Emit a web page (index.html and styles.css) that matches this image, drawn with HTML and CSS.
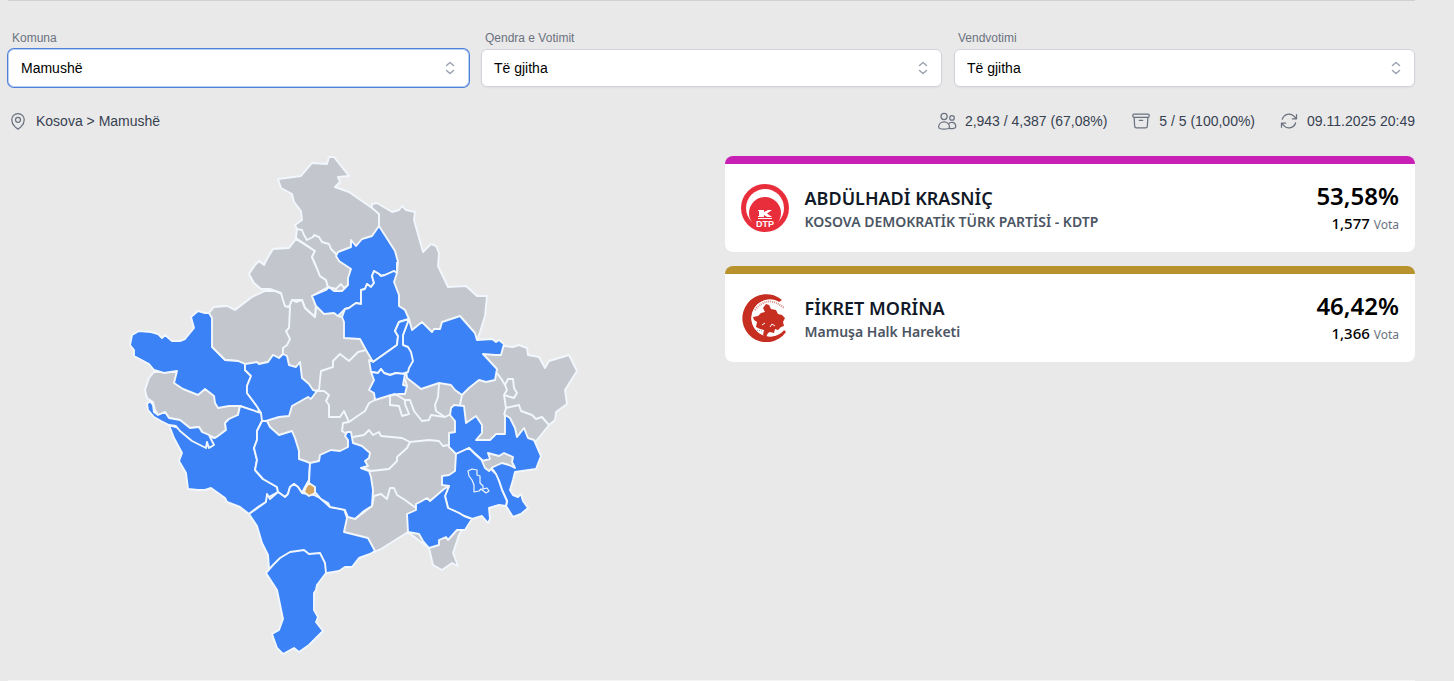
FILE: index.html
```html
<!DOCTYPE html>
<html lang="sq">
<head>
<meta charset="utf-8">
<meta name="viewport" content="width=device-width, initial-scale=1">
<title>Kosova - Mamushë</title>
<link rel="stylesheet" href="styles.css">
</head>
<body>
<main class="page">
  <form class="filters">
    <div class="field">
      <label for="komuna">Komuna</label>
      <div class="select-wrap">
        <select id="komuna" class="is-active"><option>Mamushë</option></select>
        <svg class="chevrons" viewBox="0 0 20 20" aria-hidden="true"><path d="M6.500 7.500l3.500-3 3.500 3M6.500 12.500l3.500 3 3.500-3"/></svg>
      </div>
    </div>
    <div class="field">
      <label for="qendra">Qendra e Votimit</label>
      <div class="select-wrap">
        <select id="qendra"><option>Të gjitha</option></select>
        <svg class="chevrons" viewBox="0 0 20 20" aria-hidden="true"><path d="M6.500 7.500l3.500-3 3.500 3M6.500 12.500l3.500 3 3.500-3"/></svg>
      </div>
    </div>
    <div class="field">
      <label for="vendi">Vendvotimi</label>
      <div class="select-wrap">
        <select id="vendi"><option>Të gjitha</option></select>
        <svg class="chevrons" viewBox="0 0 20 20" aria-hidden="true"><path d="M6.500 7.500l3.500-3 3.500 3M6.500 12.500l3.500 3 3.500-3"/></svg>
      </div>
    </div>
  </form>

  <div class="status">
    <div class="stat">
      <svg class="icon" viewBox="0 0 24 24" aria-hidden="true"><path d="M15 10.500a3 3 0 1 1-6 0 3 3 0 0 1 6 0Z"/><path d="M19.500 10.500c0 7.142-7.500 11.250-7.500 11.250S4.500 17.642 4.500 10.500a7.500 7.500 0 1 1 15 0Z"/></svg>
      <span>Kosova &gt; Mamushë</span>
    </div>
    <div class="stats">
      <div class="stat">
        <svg class="icon" viewBox="0 0 24 24" aria-hidden="true"><circle cx="8.500" cy="6.500" r="3.700"/><circle cx="18" cy="8.300" r="2.700"/><path d="M8.500 13c-4 0-6.500 2.800-6.500 6.200 0 1.500 3 2.600 6.500 2.600s6.500-1.100 6.500-2.600c0-3.400-2.500-6.200-6.500-6.200Z"/><path d="M13.600 15.500c1-1.200 2.500-1.900 4.200-1.900 3 0 4.700 2.200 4.700 5.200 0 1.900-3.900 3-7.700 2"/></svg>
        <span>2,943 / 4,387 (67,08%)</span>
      </div>
      <div class="stat">
        <svg class="icon" viewBox="0 0 24 24" aria-hidden="true"><path d="m20.250 7.500-.625 10.632a2.250 2.250 0 0 1-2.247 2.118H6.622a2.250 2.250 0 0 1-2.247-2.118L3.750 7.500M10 11.250h4M3.375 7.500h17.250c.621 0 1.125-.504 1.125-1.125v-1.500c0-.621-.504-1.125-1.125-1.125H3.375c-.621 0-1.125.504-1.125 1.125v1.500c0 .621.504 1.125 1.125 1.125Z"/></svg>
        <span>5 / 5 (100,00%)</span>
      </div>
      <div class="stat">
        <svg class="icon" viewBox="0 0 24 24" aria-hidden="true"><path d="M16.023 9.348h4.992V4.356M2.985 19.644v-4.992h4.992m-4.993 0 3.181 3.183a8.250 8.250 0 0 0 13.803-3.700M4.031 9.865a8.250 8.250 0 0 1 13.803-3.700l3.181 3.182"/></svg>
        <span>09.11.2025 20:49</span>
      </div>
    </div>
  </div>

  <div class="content">
    <div class="map-column">
      <svg class="map" viewBox="130 156 448 500" role="img" aria-label="Kosova">
        <g class="region">
          <!-- Country base -->
          <path d="M279 179L302 176 313 163 328 164 330 157 335 157 350 176 339 177 341 182 336 187 350 192 373 208 373 204 378 203 393 212 400 210 403 206 407 210 416 212 415 220 424 252 432 244 437 246 440 253 439 266 449 287 467 286 478 296 488 296 486 316 481 332 478 340 505 346 514 347 520 345 528 348 529 355 540 357 546 368 550 361 570 355 578 371 566 390 568 404 557 412 556 420 550 425 538 440 520 450 490 470 470 510 466 525 460 535 454 553 459 566 453 563 443 570 434 565 430 548 409 532 382 549 375 552 340 540 260 510 240 440 216 438 200 428 181 420 170 418 166 412 159 415 156 410 154 402 148 398 146 390 150 378 155 372 200 340 210 313 215 307 228 306 236 310 253 297 266 291 271 289 262 289 255 283 250 274 256 265 260 261 265 265 268 259 274 249 290 248 297 239 298 229 296 225 303 220 302 211 295 202 293 194 282 188Z"/>
          <!-- Istog -->
          <path d="M210 313L215 307 228 306 236 310 253 297 266 291 276 291 283 294 286 306 291 307 290 328 287 331 291 339 288 345 284 348 284 354 280 358 274 355 269 362 260 364 246 364 239 361 226 360 213 347Z"/>
          <!-- Zubin Potok -->
          <path d="M297 239L290 248 274 249 268 259 265 265 260 261 256 265 250 274 255 283 262 289 271 289 282 293 284 300 286 306 290 307 293 300 297 302 303 300 306 308 316 317 317 306 313 296 329 287 327 280 321 276 317 266 313 257 316 251Z"/>
          <!-- Zvecan -->
          <path d="M298 229L303 230 305 235 308 240 314 237 315 235 320 237 323 242 330 244 332 249 336 253 352 268 349 285 345 288 342 284 337 289 329 287 327 280 321 276 317 266 313 257 316 251 297 238Z"/>
          <!-- Decan -->
          <path d="M155 372L150 378 146 390 148 398 154 402 156 410 159 415 166 412 170 418 181 420 191 428 200 427 203 432 210 435 216 438 219 436 227 430 226 423 230 419 239 415 241 406 220 385 180 372Z"/>
        </g>

        <g class="region counted">
          <!-- Mitrovica -->
          <path d="M380 226L396 251 399 262 398 273 395 271 386 275 382 276 380 274 375 271 373 276 375 283 372 287 368 284 366 289 362 290 362 304 357 303 350 308 346 309 339 316 335 313 325 314 317 306 313 296 327 290 330 287 335 291 343 291 349 285 349 278 352 269 340 261 337 256 339 252 352 247 352 240 357 246 363 239 373 236Z"/>
          <!-- Vushtrri -->
          <path d="M398 273L395 271 386 275 382 276 380 274 375 271 373 276 375 283 372 287 368 284 366 289 362 290 362 304 357 303 350 308 346 309 343 317 345 322 345 338 361 339 367 350 374 362 398 345 399 336 396 331 400 322 410 319 406 310 400 306 400 295 395 282Z"/>
          <!-- Prishtina -->
          <path d="M410 319L413 330 423 322 433 332 435 329 441 329 443 322 461 316 476 333 478 340 493 339 497 342 500 340 505 344 502 355 496 355 484 354 498 369 496 380 487 382 480 380 470 388 463 395 456 390 452 385 440 383 422 389 417 385 408 378 404 345 404 335Z"/>
          <!-- Obiliq -->
          <path d="M410 319L400 322 396 331 399 336 398 345 374 362 370 360 372 372 379 373 382 369 385 373 391 375 397 373 403 374 409 372 410 368 414 361 412 352 409 347 404 345 404 335Z"/>
          <!-- Fushe Kosova -->
          <path d="M372 372L379 373 382 369 385 373 391 375 397 373 406 374 404 385 408 386 406 394 400 394 389 396 376 400 375 393 370 390 375 380Z"/>
          <!-- Peja -->
          <path d="M210 313L206 313 199 311 192 317 195 328 186 339 181 341 173 341 166 335 163 338 159 334 152 332 140 331 133 335 131 345 135 350 135 356 150 364 155 370 165 373 178 371 175 383 184 389 199 395 206 389 215 396 216 403 219 408 230 406 241 406 259 413 260 408 257 405 248 393 248 386 252 376 246 370 246 364 239 361 226 360 213 347 213 318Z"/>
          <!-- Klina -->
          <path d="M246 364L258 362 260 364 269 362 274 355 280 358 284 354 288 356 290 365 297 367 301 362 303 378 310 384 314 390 318 391 312 399 309 397 293 406 290 416 280 417 267 421 262 421 262 413 257 405 248 393 248 386 252 376 246 370Z"/>
          <!-- Gjakova -->
          <path d="M241 406L262 413 263 421 258 431 258 440 255 448 258 460 256 470 264 479 278 487 279 492 268 498 267 502 259 507 250 514 241 507 228 502 226 498 212 488 206 490 199 490 189 489 187 473 180 461 183 453 175 438 170 425 210 437 216 438 219 436 227 430 226 423 230 419 239 415Z"/>
          <!-- Junik -->
          <path d="M151 401L148 404 149 410 155 417 162 421 170 425 177 426 181 431 193 441 207 448 208 442 210 448 215 445 210 435 203 432 200 427 191 428 181 420 170 418 166 412 159 415 155 412 154 405Z"/>
          <!-- Rahovec -->
          <path d="M263 421L268 421 271 427 280 435 293 431 296 438 300 451 300 459 306 461 311 463 310 480 306 487 303 493 299 487 295 484 291 487 289 494 286 497 279 492 278 487 264 479 256 470 258 460 255 448 258 440 258 431Z"/>
          <!-- Prizren -->
          <path d="M250 514L267 502 268 494 271 499 279 492 286 497 289 494 291 487 295 484 299 487 303 493 315 495 321 498 331 507 345 509 348 518 345 532 369 538 376 551 371 554 360 558 353 567 346 567 340 571 328 573 300 580 270 568 269 555 263 543 258 526Z"/>
          <!-- Suhareka -->
          <path d="M311 463L320 461 321 455 332 450 341 451 349 447 349 440 346 436 348 432 352 432 354 443 363 446 371 453 370 458 366 461 369 466 362 468 370 471 372 477 374 490 373 506 365 511 356 519 349 517 346 510 331 507 329 503 322 499 316 492 310 483Z"/>
          <!-- Dragash -->
          <path d="M267 573L274 565 281 558 291 552 305 550 310 554 321 553 326 563 327 573 318 585 317 590 315 593 315 610 319 617 317 622 324 631 310 645 300 652 295 648 284 654 278 648 273 634 280 630 284 619 278 590Z"/>
          <!-- Gjilan -->
          <path d="M456 421L451 415 452 408 455 405 465 406 467 423 477 416 483 425 483 433 477 440 491 440 497 434 506 434 506 415 511 418 516 428 518 437 525 428 529 438 535 440 542 456 537 469 516 472 514 480 511 490 514 495 519 497 522 494 524 501 529 508 522 514 514 517 507 506 508 501 503 490 500 481 495 471 470 448 457 454 450 447 450 433 456 432Z"/>
          <!-- Viti -->
          <path d="M470 448L457 454 456 471 450 475 443 476 443 485 450 486 446 496 449 508 460 513 465 516 473 519 483 516 489 523 491 519 490 508 500 505 507 506 508 501 503 490 500 481 497 474 486 463 476 454Z"/>
          <!-- Kacanik -->
          <path d="M408 514L417 510 417 504 421 502 428 498 431 501 445 489 450 486 446 496 449 508 460 513 465 516 473 519 466 530 458 530 449 540 447 537 440 540 440 545 430 548 424 541 420 534 409 532Z"/>
          <!-- Enclave inside Viti -->
          <path class="fine" d="M469 471L473 469 478 470 478 475 481 476 481 483 484 486 484 489 488 488 490 491 487 493 482 489 480 491 475 492 475 485 473 480 470 476Z"/>
        </g>

        <path class="region selected" d="M310 483L316 487 316 493 310 496 305 492 307 487Z"/>
        <path class="region" d="M483 461L491 459 489 453 500 456 505 453 514 457 513 462 516 468 510 465 503 463 494 467 490 471 486 468Z"/>

        <!-- Borders between regions that share the base fill -->
        <g class="border">
          <path d="M373 208L380 214 380 226M398 273L398 262"/>
          <path d="M290 307L293 300 303 300 306 308 316 317 317 306M343 317L339 316"/>
          <path d="M367 350L359 352 350 361 341 354 334 361 334 367 322 371 321 380 320 390 316 391M316 391L325 391 330 395 327 401 330 405 330 417 341 417 345 411 350 422 344 423 343 431 348 434"/>
          <path d="M350 422L360 415 366 411 370 403 376 400M391 396L391 405 400 406 403 416 410 414 406 404 406 400 411 400 415 411 423 421 430 420 432 415 446 417 452 414"/>
          <path d="M389 396L396 394 406 400M440 384L439 397 436 405 437 411 446 417M463 395L461 405"/>
          <path d="M406 379L408 386M354 437L365 435 370 430 374 435 380 432 382 436 403 438 411 442 430 440 440 441 444 446 450 445"/>
          <path d="M411 442L408 448 398 457 398 461 390 469 372 471 364 468"/>
          <path d="M356 519L373 506 375 496 382 494 388 499 391 488 395 488 398 495 406 500 417 508"/>
          <path d="M498 373L503 380 506 385 509 379 514 379 515 388 518 393 515 398 505 395 507 408 520 405 522 411 533 415 537 419 543 417 550 425M506 385L508 390 505 395M505 415L507 408"/>
        </g>
      </svg>
    </div>

    <section class="results">
      <article class="card card-magenta">
        <svg class="logo" viewBox="0 0 48 48" role="img" aria-label="KDTP">
          <circle cx="24" cy="24" r="24" fill="#e92e3b"/>
          <circle cx="24" cy="24" r="19" fill="#fff"/>
          <circle cx="24" cy="29" r="16" fill="#e92e3b"/>
          <path fill="#fff" d="M17 26h6v2l4-2h4l-5 3.500 5 3.500h-5l-3-2v2h-6v-1h1v-5h-1zM17 34h14v1H17z"/>
          <text x="24" y="43" text-anchor="middle" class="logo-text">DTP</text>
        </svg>
        <div class="who">
          <h2>ABDÜLHADİ KRASNİÇ</h2>
          <p>KOSOVA DEMOKRATİK TÜRK PARTİSİ - KDTP</p>
        </div>
        <div class="score">
          <strong>53,58%</strong>
          <p>1,577 <span>Vota</span></p>
        </div>
      </article>
      <article class="card card-gold">
        <svg class="logo" viewBox="0 0 48 48" aria-hidden="true">
          <path fill="#c52e20" d="M41 6A24 24 0 1 0 45 38L43 36A18.500 18.500 0 1 1 38 8Z"/>
          <circle cx="29" cy="24" r="18.500" fill="#fff"/>
          <path fill="#c52e20" d="M22 14l3-4 3 1 2 4 5 1 2 4 4 1 3 3-2 4 1 4-3 1-3 3-3-1-1 4-4-1-2 1-2 4-3-2 1-5-4-1-4-2 1-5-3-2-1-3 5-1 3-3 4-1z"/>
          <path d="M29 33l2-3 3 2M21 31l3-2" fill="none" stroke="#fff"/>
          <path d="M14 16Q27 0 43 14" fill="none" stroke="#d98a82" stroke-width="2" stroke-dasharray="1 1"/>
          <path d="M16 36l5 1" fill="none" stroke="#8a98b8" stroke-width="1" stroke-dasharray="1 1"/>
        </svg>
        <div class="who">
          <h2>FİKRET MORİNA</h2>
          <p>Mamuşa Halk Hareketi</p>
        </div>
        <div class="score">
          <strong>46,42%</strong>
          <p>1,366 <span>Vota</span></p>
        </div>
      </article>
    </section>
  </div>
</main>
</body>
</html>
```
FILE: styles.css
```css
* {
  box-sizing: border-box;
}

body {
  margin: 0;
  background: #e9e9e9;
  color: #374151;
  font-family: "Liberation Sans", Arial, sans-serif;
  font-size: 14px;
  line-height: 20px;
}

h2,
p {
  margin: 0;
}

.page {
  margin: 0 39px 0 8px;
  border-top: 1px solid #d1d1d3;
  border-bottom: 1px solid #f5f5f5;
  padding: 29px 0 24px;
}

.filters {
  display: grid;
  grid-template-columns: repeat(3, 1fr);
  gap: 12px;
}

.field label {
  display: block;
  margin-bottom: 3px;
  padding-left: 4px;
  color: #6b7280;
  font-size: 12px;
  line-height: 16px;
}

.select-wrap {
  position: relative;
}

.select-wrap select {
  display: block;
  width: 100%;
  height: 38px;
  padding: 0 40px 0 12px;
  border: 1px solid #d1d5db;
  border-radius: 6px;
  background: #fff;
  box-shadow: 0 1px 2px rgba(0, 0, 0, 0.05);
  color: #000;
  font: inherit;
  appearance: none;
}

.select-wrap select.is-active {
  border-color: #b9d0f5;
  box-shadow: 0 0 0 1px #4f7fd6;
}

.chevrons {
  position: absolute;
  top: 9px;
  right: 9px;
  width: 20px;
  height: 20px;
  fill: none;
  stroke: #9ca3af;
  stroke-width: 1.5;
  stroke-linecap: round;
  stroke-linejoin: round;
  pointer-events: none;
}

.status {
  display: flex;
  justify-content: space-between;
  margin: 24px 0 25px;
}

.stats {
  display: flex;
  gap: 24px;
}

.stat {
  display: flex;
  align-items: center;
  gap: 8px;
}

.icon {
  width: 20px;
  height: 20px;
  fill: none;
  stroke: #6b7280;
  stroke-width: 1.5;
  stroke-linecap: round;
  stroke-linejoin: round;
}

.content {
  display: grid;
  grid-template-columns: 1fr 1fr;
  align-items: start;
  gap: 26px;
}

.map-column {
  display: flex;
  justify-content: center;
}

.map {
  width: 100%;
  max-width: 448px;
  overflow: visible;
}

.region,
.border {
  fill: #c3c6cd;
  stroke: #f1f7fd;
  stroke-width: 1.9;
  stroke-linejoin: round;
}

.counted {
  fill: #3b82f6;
}

.selected {
  fill: #d5a45f;
}

.border {
  fill: none;
}

.fine {
  stroke-width: 1.2;
}

.results {
  display: grid;
  gap: 14px;
}

.card {
  display: flex;
  align-items: center;
  gap: 16px;
  height: 96px;
  padding: 0 16px;
  border-top: 8px solid;
  border-radius: 8px;
  background: #fff;
  font-family: "Noto Sans", "Open Sans", sans-serif;
}

.card-magenta {
  border-top-color: #c81fb4;
}

.card-gold {
  border-top-color: #b8922d;
}

.logo {
  flex: none;
  width: 48px;
  height: 48px;
}

.logo-text {
  fill: #fff;
  font: bold 9px "Liberation Sans", sans-serif;
}

.who {
  flex: 1;
}

.who h2 {
  color: #111827;
  font-size: 18px;
  font-weight: 600;
  line-height: 28px;
}

.who p {
  color: #4b5563;
  font-weight: 600;
}

.score {
  color: #000;
  text-align: right;
}

.score strong {
  display: block;
  font-size: 24px;
  font-weight: 600;
  line-height: 32px;
}

.score p {
  font-size: 15px;
  font-weight: 500;
  line-height: 22px;
}

.score span {
  color: #6b7280;
  font-size: 12px;
  font-weight: 400;
}
```
